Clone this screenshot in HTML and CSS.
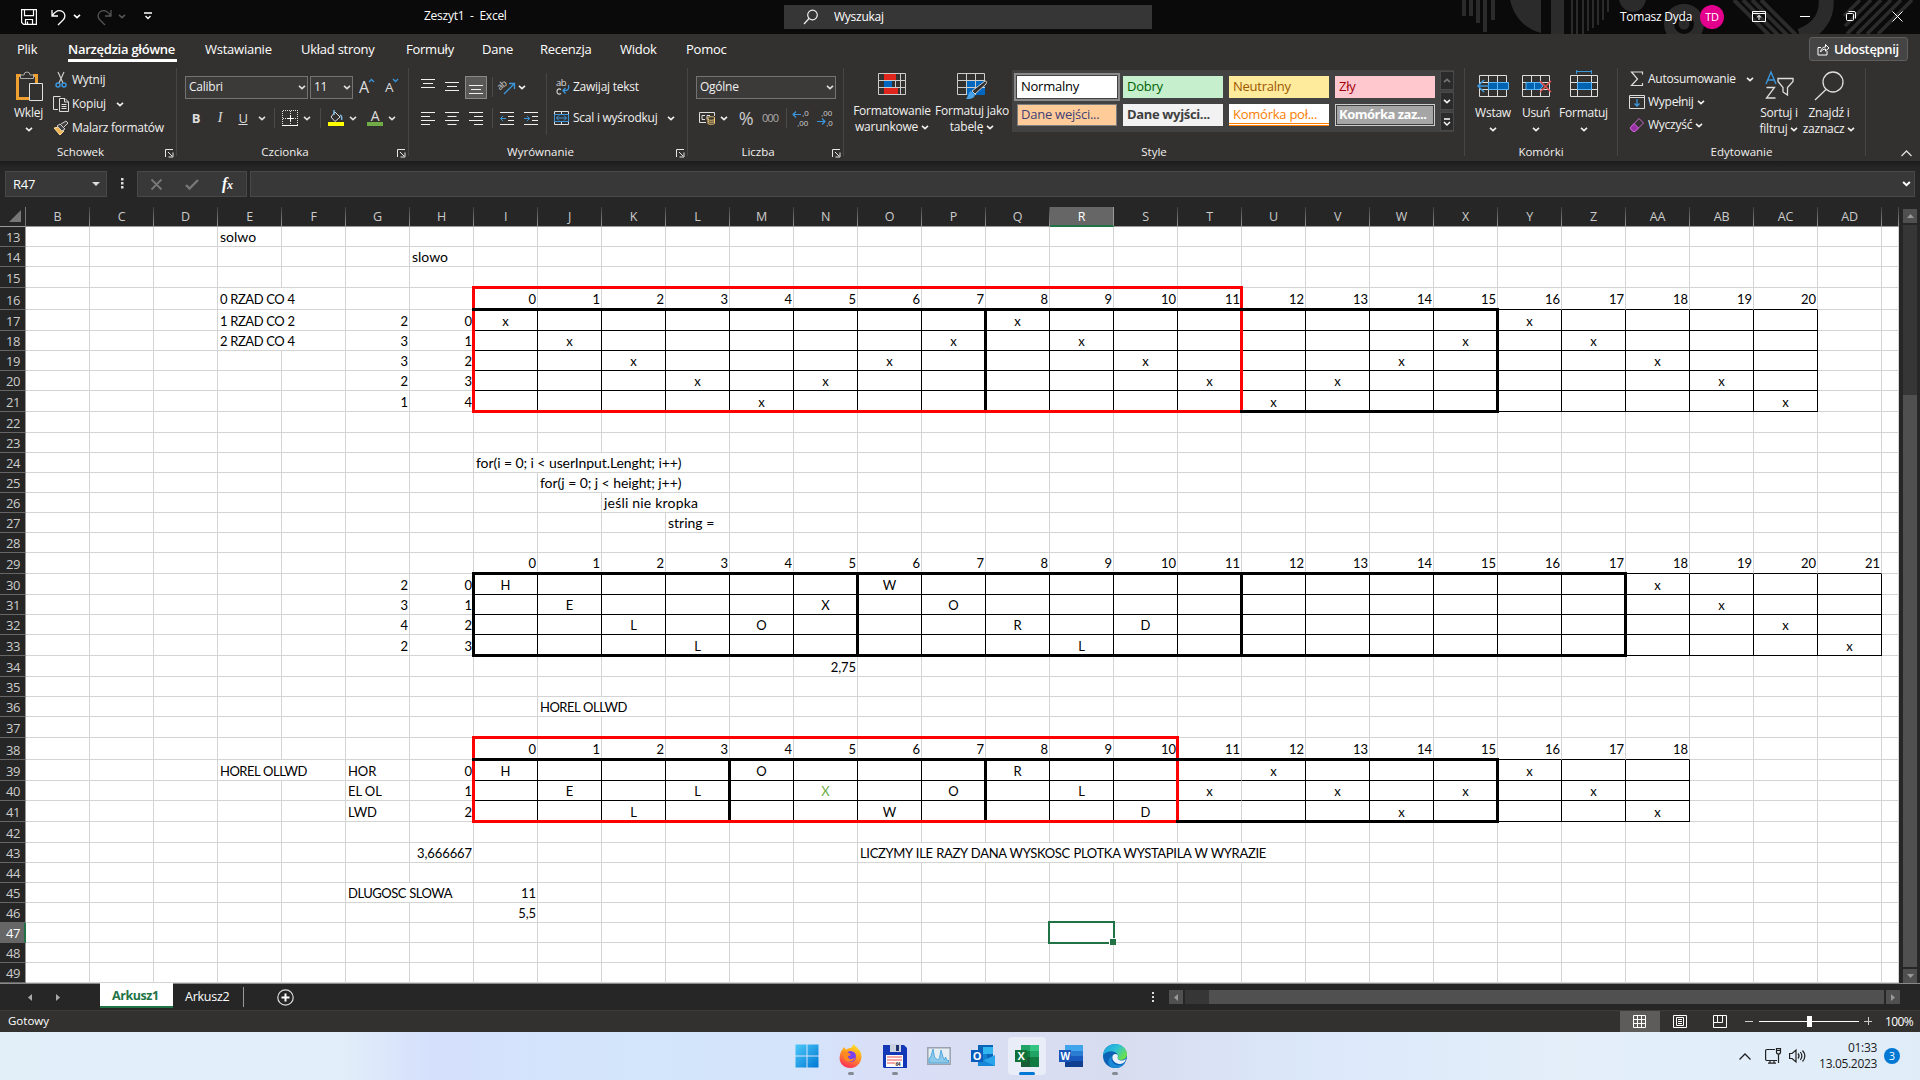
FILE: index.html
```html
<!DOCTYPE html>
<html lang="pl">
<head>
<meta charset="utf-8">
<title>Zeszyt1 - Excel</title>
<link rel="stylesheet" href="styles.css">
</head>
<body>
<svg class="defs" width="0" height="0">
  <symbol id="chev" viewBox="0 0 8 5"><path d="M1 .8 4 3.6 7 .8" fill="none" stroke="currentColor" stroke-width="1.6"/></symbol>
  <symbol id="launch" viewBox="0 0 9 9"><path d="M.5 8V.5H8M3 3l4 4M8 3.5V8H3.5" fill="none" stroke="#e6e6e6"/></symbol>
  <linearGradient id="gwin" x2="1" y2="1"><stop stop-color="#4cc8f8"/><stop offset="1" stop-color="#0078d4"/></linearGradient>
  <linearGradient id="gff" x1=".7" y1="0" x2=".3" y2="1"><stop stop-color="#ffe226"/><stop offset=".45" stop-color="#ff9a1f"/><stop offset="1" stop-color="#ff2a5a"/></linearGradient>
  <linearGradient id="gedge" x2="1" y2=".6"><stop stop-color="#1b9de2"/><stop offset=".55" stop-color="#2fc2d6"/><stop offset="1" stop-color="#6ae04c"/></linearGradient>
</svg>

<header class="titlebar">
  <div class="quick">
    <svg width="16" height="16" viewBox="0 0 16 16" fill="none" stroke="#fff" stroke-width="1.2"><path d="M.6.6h14.8v14.8H2.6l-2-2zM3.5.6v6h9v-6M4.5 15v-4.5h7V15M6.5 12.500v2.500"/></svg>
    <svg width="16" height="17" viewBox="0 0 16 17" fill="none" stroke="#fff" stroke-width="1.3"><path d="M1 1v6h6M1.200 6.800C4 2.500 8 .5 11.500 2.500c3 2 3 5.500 1 8L7 16"/></svg>
    <svg class="c lit" width="8" height="5"><use href="#chev"/></svg>
    <svg width="16" height="17" viewBox="0 0 16 17" fill="none" stroke="#555" stroke-width="1.3"><path d="M15 1v6H9M14.800 6.800C12 2.500 8 .5 4.500 2.500c-3 2-3 5.500-1 8L9 16"/></svg>
    <svg class="c dim" width="8" height="5"><use href="#chev"/></svg>
    <svg class="more" width="8" height="8" viewBox="0 0 8 8" fill="none" stroke="#fff" stroke-width="1.300"><path d="M0 1h8M1.500 4 4 6.500 6.500 4"/></svg>
  </div>
  <div class="doc">Zeszyt1 &nbsp;-&nbsp; Excel</div>
  <div class="search">
    <svg width="16" height="16" viewBox="0 0 16 16" fill="none" stroke="#eee" stroke-width="1.200"><circle cx="9.500" cy="6" r="4.800"/><path d="M6 9.500 1 15"/></svg>
    <span>Wyszukaj</span>
  </div>
  <div class="right">
    <svg class="deco" width="460" height="34" viewBox="1460 0 460 34" fill="none" stroke="#2b2b2b">
      <path stroke-width="4" d="M1464 0v16M1471 0v16M1478 0v23M1485 0v32M1493 0v20"/>
      <path fill="#2b2b2b" stroke="none" d="M1510 0h31v33c-16-4-27-16-31-33zM1551 0h13v34h-13zM1619 0h27c-2 8-7 12-13 12s-12-4-14-12z"/>
      <path stroke-width="2" d="M1572 0v34M1577 0v34M1583 0v34M1588 0v31M1593 0v28M1598 0v25M1603 0v20M1608 0v12"/>
      <circle cx="1684" cy="24" r="15" stroke-width="10"/><circle cx="1684" cy="24" r="3" stroke-width="5"/>
      <path stroke-width="4" d="M1734 0l37 37M1743 0l37 37M1752 0l37 37M1761 0l35 35"/>
      <path stroke-width="15" d="M1826-2c2 18-8 32-26 38"/>
      <path stroke-width="3.500" d="M1860 0l-16 16M1871 0l-26 26M1881 0l-34 34M1891 0l-34 34M1901 0l-34 34M1912 0l-34 34"/>
    </svg>
    <span class="user">Tomasz Dyda</span>
    <span class="avatar">TD</span>
    <svg class="w1" width="14" height="11" viewBox="0 0 14 11" fill="none" stroke="#fff"><path d="M.5.5h13v10H.5zM.5 2.500h13M7 9V4.500M4.800 6.500 7 4.500l2.200 2"/></svg>
    <svg class="w2" width="10" height="10" viewBox="0 0 10 10" stroke="#fff"><path d="M0 5.500h10"/></svg>
    <svg class="w3" width="10" height="10" viewBox="0 0 10 10" fill="none" stroke="#fff"><rect x=".5" y="2.500" width="7" height="7" rx="1"/><path d="M2.500.5H8A1.500 1.500 0 0 1 9.500 2v5.500"/></svg>
    <svg class="w4" width="11" height="11" viewBox="0 0 11 11" stroke="#fff"><path d="M.5.5l10 10M10.500.5l-10 10"/></svg>
  </div>
</header>

<nav class="tabs">
  <span class="t1">Plik</span><span class="t2"><b>Narzędzia główne</b></span><span class="t3">Wstawianie</span><span class="t4">Układ strony</span><span class="t5">Formuły</span><span class="t6">Dane</span><span class="t7">Recenzja</span><span class="t8">Widok</span><span class="t9">Pomoc</span>
  <button class="share"><svg width="13" height="13" viewBox="0 0 13 13" fill="none" stroke="#fff"><path d="M4 4.500H1v7.500h9V8M3.500 9C4 5.500 6 4 8.500 4V1.500L12 5 8.500 8V6C6.500 6 5 7 3.500 9z"/></svg>Udostępnij</button>
</nav>

<section class="ribbon">
  <div class="group g-clip">
    <div class="body">
      <div class="big paste"><svg width="28" height="31" viewBox="0 0 28 31" fill="none"><path d="M6 4.500H2.500v23H14M18 4.500h3.500V12" stroke="#f0a030" stroke-width="3"/><path d="M5.500 7.500V4H9a3 3 0 0 1 6 0h3.500v3.500z" fill="#33312f" stroke="#aaa"/><path d="M14.500 12.500h13v17h-13z" fill="#33312f" stroke="#e0e0e0"/></svg><span>Wklej</span><svg class="c" width="8" height="5"><use href="#chev"/></svg></div>
      <div class="lines">
        <div><svg width="16" height="16" viewBox="0 0 16 16" fill="none" stroke="#ccc" stroke-width="1.200"><path d="M5 0l5 11M11 0 6 11"/><g stroke="#3a96dd" stroke-width="1.500"><circle cx="5" cy="13" r="2"/><circle cx="11" cy="13" r="2"/></g></svg>Wytnij</div>
        <div><svg width="16" height="16" viewBox="0 0 16 16" fill="none" stroke="#ddd"><path d="M5 13.500H.5V.5h7M6.500 2.500H12l3.500 3.500v9.500h-9zM11.500 2.500V6h4M8.500 8.500h5M8.500 10.500h5M8.500 12.500h5"/></svg>Kopiuj<svg class="c" width="8" height="5"><use href="#chev"/></svg></div>
        <div><svg width="16" height="16" viewBox="0 0 16 16"><path d="M1 8l5-1 5 4-4 4z" fill="#f2b451" stroke="#ffe0a0"/><path d="M4 6l3-2 5 5-3 2zM8 4l5-3 2 2-4 4" fill="#444" stroke="#ccc"/></svg>Malarz formatów</div>
      </div>
    </div>
    <div class="foot has-launch"><span>Schowek</span><svg width="9" height="9"><use href="#launch"/></svg></div>
  </div>

  <div class="group g-font">
    <div class="body rows">
      <div class="row r1">
        <div class="combo name">Calibri<svg width="8" height="5"><use href="#chev"/></svg></div>
        <div class="combo size">11<svg width="8" height="5"><use href="#chev"/></svg></div>
        <span class="grow big-a">A<svg width="5" height="3" viewBox="0 0 5 3"><path d="M0 3 2.500.5 5 3" fill="none" stroke="#3a96dd" stroke-width="1.300"/></svg></span>
        <span class="grow small-a">A<svg width="5" height="3" viewBox="0 0 5 3"><path d="M0 0l2.500 2.500L5 0" fill="none" stroke="#3a96dd" stroke-width="1.300"/></svg></span>
      </div>
      <div class="row r2">
        <b>B</b><i>I</i><u>U</u><svg width="8" height="5"><use href="#chev"/></svg><s></s>
        <svg width="16" height="16" viewBox="0 0 16 16" shape-rendering="crispEdges"><path d="M.5.5h15v15M.5.5v15M8 1v14M1 8h14" stroke="#ddd" fill="none" stroke-dasharray="1 1"/><path d="M0 15.500h16M5 8h6M8 5v6" stroke="#fff"/></svg>
        <svg width="8" height="5"><use href="#chev"/></svg><s></s>
        <svg width="16" height="16" viewBox="0 0 16 16"><path d="M7 2l5 5-5 4.500L3 7z" fill="none" stroke="#ddd"/><path d="M6 0v5M12 5c2 1 2 3 1.500 5" fill="none" stroke="#7fb8e0" stroke-width="1.500"/><path d="M0 12h16v4H0z" fill="#ff0"/></svg>
        <svg width="8" height="5"><use href="#chev"/></svg>
        <span class="fc">A</span><svg width="8" height="5"><use href="#chev"/></svg>
      </div>
    </div>
    <div class="foot has-launch"><span>Czcionka</span><svg width="9" height="9"><use href="#launch"/></svg></div>
  </div>

  <div class="group g-align">
    <div class="body">
      <div class="rows icons">
        <div class="row">
          <svg class="up" width="14" height="10" viewBox="0 0 14 10" stroke="#eee"><path d="M0 .5h14M2 4.500h10M0 8.500h14"/></svg>
          <svg width="14" height="10" viewBox="0 0 14 10" stroke="#eee"><path d="M0 .5h14M2 4.500h10M0 8.500h14"/></svg>
          <span class="sel"><svg width="14" height="10" viewBox="0 0 14 10" stroke="#eee"><path d="M0 .5h14M2 4.500h10M0 8.500h14"/></svg></span>
          <s></s>
          <svg width="18" height="16" viewBox="0 0 18 16"><text x="1" y="9" font-size="9" fill="#ccc" transform="rotate(-40 5 9)">ab</text><path d="M6 15 16 5M11 4.500h5.500V10" fill="none" stroke="#3a96dd" stroke-width="1.300"/></svg>
          <svg width="8" height="5"><use href="#chev"/></svg>
        </div>
        <div class="row">
          <svg width="14" height="13" viewBox="0 0 14 13" stroke="#eee"><path d="M0 .5h14M0 4.500h9M0 8.500h14M0 12.500h9"/></svg>
          <svg width="14" height="13" viewBox="0 0 14 13" stroke="#eee"><path d="M0 .5h14M2.500 4.500h9M0 8.500h14M2.500 12.500h9"/></svg>
          <svg width="14" height="13" viewBox="0 0 14 13" stroke="#eee"><path d="M0 .5h14M5 4.500h9M0 8.500h14M5 12.500h9"/></svg>
          <s></s>
          <svg width="14" height="13" viewBox="0 0 14 13" stroke="#eee" fill="none"><path d="M0 .5h14M8 4.500h6M8 8.500h6M0 12.500h14"/><path d="M6 6.500H.5M3 4 .5 6.500 3 9" stroke="#3a96dd"/></svg>
          <svg width="14" height="13" viewBox="0 0 14 13" stroke="#eee" fill="none"><path d="M0 .5h14M8 4.500h6M8 8.500h6M0 12.500h14"/><path d="M0 6.500h5.500M3 4l2.500 2.500L3 9" stroke="#3a96dd"/></svg>
        </div>
      </div>
      <div class="rows wrap">
        <div class="row"><svg width="16" height="16" viewBox="0 0 16 16"><text x="2" y="6.500" font-size="9.500" fill="#ddd">ab</text><path d="M7 10.500C4.500 9 3 10.500 3 12.500s1.500 3.500 4 2" fill="none" stroke="#ddd" stroke-width="1.100"/><path d="M14.500 6c1 4-1 6-5 5.500M11.500 9 9 11.500l2.500 3" fill="none" stroke="#3a96dd" stroke-width="1.300"/></svg>Zawijaj tekst</div>
        <div class="row"><svg width="16" height="15" viewBox="0 0 16 15" fill="none"><path d="M.5.5h14v13H.5zM7.500 0v14" stroke="#ddd"/><path d="M.5 3.500h14v7H.5z" fill="#33312f" stroke="#3a96dd"/><path d="M2.500 7h10M5 4.500 2.500 7 5 9.500M10 4.500 12.500 7 10 9.500" stroke="#3a96dd"/></svg>Scal i wyśrodkuj<svg class="c" width="8" height="5"><use href="#chev"/></svg></div>
      </div>
    </div>
    <div class="foot has-launch"><span>Wyrównanie</span><svg width="9" height="9"><use href="#launch"/></svg></div>
  </div>

  <div class="group g-num">
    <div class="body rows">
      <div class="row"><div class="combo fmt">Ogólne<svg width="8" height="5"><use href="#chev"/></svg></div></div>
      <div class="row r2">
        <svg width="16" height="14" viewBox="0 0 16 14" fill="none"><path d="M7 11.500H.5v-10h15V5M6 4.500H3v4h3M8 8.500v-4h3" stroke="#ddd"/><path d="M9 6.500c0-1 6.500-1 6.500 0v6c0 1-6.500 1-6.500 0z" fill="#33312f" stroke="#f6cf78"/><path d="M9 8.500c1 1 5.500 1 6.500 0M9 10.500c1 1 5.500 1 6.500 0" stroke="#f6cf78"/></svg>
        <svg width="8" height="5"><use href="#chev"/></svg>
        <span class="pct">%</span><span class="zeros">000</span><s></s>
        <svg class="dec" width="16" height="16" viewBox="0 0 16 16"><text x="9" y="6.300">,0</text><text x="4" y="15.700">,00</text><path d="M8 4.500H0M3 1.500l-3 3 3 3" fill="none" stroke="#3a96dd" stroke-width="1.200"/></svg>
        <svg class="dec" width="16" height="16" viewBox="0 0 16 16"><text x="4" y="6.300">,00</text><text x="9" y="15.700">,0</text><path d="M0 11.500h8M5 8.500l3 3-3 3" fill="none" stroke="#3a96dd" stroke-width="1.200"/></svg>
      </div>
    </div>
    <div class="foot has-launch"><span>Liczba</span><svg width="9" height="9"><use href="#launch"/></svg></div>
  </div>

  <div class="group g-style">
    <div class="body">
      <div class="big cf"><svg width="28" height="29" viewBox="0 -3 28 29" fill="none"><path d="M.5.500h27v21H.5zM6.500 0v22M17.500 0v22M22.500 0v22M0 7.500h28M0 14.500h28" stroke="#ccc"/><path d="M6 1h12v6H6zM6 15h14v6H6z" fill="#e0261c"/><path d="M6 8h8v6H6z" fill="#0067c0"/></svg><span>Formatowanie</span><span>warunkowe <svg width="8" height="5"><use href="#chev"/></svg></span></div>
      <div class="big ft"><svg width="30" height="29" viewBox="0 -3 30 29" fill="none"><path d="M.5.500h27v21H.5z" stroke="#ccc"/><path d="M9 7h19v15H9z" fill="#0067c0"/><path d="M9.500 0v22M18.500 0v22M0 7.500h28M0 14.500h28" stroke="#ccc"/><path d="M28 8c2 0 2 1 1 3L18 21l-3-3z" fill="#33312f" stroke="#ccc"/><path d="M14 18l4 4c-1 4-5 4-9 4 2-2 2-6 5-8z" fill="#4aa3e6"/></svg><span>Formatuj jako</span><span>tabelę <svg width="8" height="5"><use href="#chev"/></svg></span></div>
      <div class="gallery">
        <div class="swatches">
          <span class="normal">Normalny</span><span class="good">Dobry</span><span class="neutral">Neutralny</span><span class="bad">Zły</span>
          <span class="input">Dane wejści...</span><span class="output">Dane wyjści...</span><span class="linked">Komórka poł...</span><span class="check">Komórka zaz...</span>
        </div>
        <div class="spin"><div class="off"><svg width="8" height="5"><use href="#chev"/></svg></div><div><svg width="8" height="5"><use href="#chev"/></svg></div><div><svg width="8" height="8" viewBox="0 0 8 8" fill="none" stroke="#fff" stroke-width="1.400"><path d="M1 1h6M1 4l3 3 3-3"/></svg></div></div>
      </div>
    </div>
    <div class="foot"><span>Style</span></div>
  </div>

  <div class="group g-cells">
    <div class="body">
      <div class="big"><svg width="34" height="31" viewBox="0 0 34 31" fill="none"><path d="M3.500 5.500h27v21h-27zM12.500 5.500v21M21.500 5.500v21M3.500 12.500h27M3.500 19.500h27" stroke="#ddd"/><path d="M12.500 12.500h20v7h-20zM21.500 12.500v7" fill="#0063b1" stroke="#5ab4f5"/><path d="M13 16H2M8 10l-6 6 6 6" stroke="#3a96dd" stroke-width="1.500"/></svg><span>Wstaw</span><svg class="c" width="8" height="5"><use href="#chev"/></svg></div>
      <div class="big"><svg width="34" height="31" viewBox="0 0 34 31" fill="none"><path d="M3.500 5.500h27v21h-27zM12.500 5.500v21M21.500 5.500v21M3.500 12.500h27M3.500 19.500h27" stroke="#ddd"/><path d="M7 12.500h14l3 3.500-3 3.500H7zM15.500 12.500v7" fill="#0063b1" stroke="#5ab4f5"/><path d="M21 11l11 11M32 11 21 22" stroke="#e05050" stroke-width="1.500"/></svg><span>Usuń</span><svg class="c" width="8" height="5"><use href="#chev"/></svg></div>
      <div class="big"><svg width="34" height="31" viewBox="0 0 34 31" fill="none"><path d="M3.500 5.500h27v21h-27zM10.500 5.500v21M24.500 5.500v21M3.500 12.500h27M3.500 19.500h27" stroke="#ddd"/><path d="M10.500 12.500h14v7h-14z" fill="#0063b1" stroke="#5ab4f5"/><path d="M9.500 1.500h15M9.500 0v4M24.500 0v4" stroke="#3a96dd"/></svg><span>Formatuj</span><svg class="c" width="8" height="5"><use href="#chev"/></svg></div>
    </div>
    <div class="foot"><span>Komórki</span></div>
  </div>

  <div class="group g-edit">
    <div class="body">
      <div class="lines">
        <div class="auto"><svg width="16" height="16" viewBox="0 0 16 16" fill="none" stroke="#ddd" stroke-width="1.200"><path d="M13.500 3.500V1H2.500l6 7-6 6.500h11V12"/></svg>Autosumowanie<svg class="c" width="8" height="5"><use href="#chev"/></svg></div>
        <div><svg width="16" height="16" viewBox="0 0 16 16" fill="none" stroke="#ddd"><path d="M.5 1.500h15v13H.5zM.5 3.500h15"/><path d="M8 5v7M5.500 9.500 8 12l2.500-2.500" stroke="#3a96dd" stroke-width="1.300"/></svg>Wypełnij<svg class="c" width="8" height="5"><use href="#chev"/></svg></div>
        <div><svg width="16" height="16" viewBox="0 0 16 16" fill="none" stroke="#c868d0"><path d="M10 1.500 14.500 6 6 14.500H4L1 11z"/><path d="M5 6.500 9.500 11 6 14.500H4L1 11z" fill="#9a2fa8"/></svg>Wyczyść<svg class="c" width="8" height="5"><use href="#chev"/></svg></div>
      </div>
      <div class="big sort"><svg width="30" height="31" viewBox="0 0 30 31" fill="none"><path d="M2 14 7 2l5 12M4 10h6" stroke="#3a96dd" stroke-width="1.400"/><path d="M2.500 17.500h8l-8 10.500h9M14 8.500h15v3l-5.500 6V25L19 22v-4.500l-5-6z" stroke="#ddd" stroke-width="1.300"/></svg><span>Sortuj i</span><span>filtruj <svg width="8" height="5"><use href="#chev"/></svg></span></div>
      <div class="big find"><svg width="30" height="31" viewBox="0 0 30 31" fill="none" stroke="#ddd" stroke-width="1.300"><circle cx="19" cy="12" r="10"/><path d="M12 19.500 1 30"/></svg><span>Znajdź i</span><span>zaznacz <svg width="8" height="5"><use href="#chev"/></svg></span></div>
    </div>
    <div class="foot"><span>Edytowanie</span></div>
  </div>
  <svg class="collapse" width="11" height="7" viewBox="0 0 11 7" fill="none" stroke="#ddd" stroke-width="1.300"><path d="M.5 6 5.500 1l5 5"/></svg>
</section>

<section class="formula">
  <div class="namebox">R47<svg width="8" height="4" viewBox="0 0 8 4"><path d="M0 0h8L4 4z" fill="#ddd"/></svg></div>
  <svg class="dots" width="3" height="11" viewBox="0 0 3 11"><path d="M0 0h2.500v2.500H0zM0 4h2.500v2.500H0zM0 8h2.500v2.500H0z" fill="#ddd"/></svg>
  <div class="fx">
    <svg width="11" height="11" viewBox="0 0 11 11" stroke="#777" stroke-width="1.800"><path d="M.5.5l10 10M10.500.5l-10 10"/></svg>
    <svg width="14" height="11" viewBox="0 0 14 11" fill="none" stroke="#777" stroke-width="2.400"><path d="M1 6l3.500 3.500L13 1"/></svg>
    <span>f<small>x</small></span>
  </div>
  <div class="input"><svg width="9" height="6" viewBox="0 0 8 5"><path d="M1 .8 4 3.600 7 .8" fill="none" stroke="#fff" stroke-width="1.800"/></svg></div>
</section>

<main class="work">
  <div class="sheet" id="sheet"></div>
  <div class="vscroll"><div class="sbtn"><svg width="7" height="4" viewBox="0 0 7 4"><path d="M0 4h7L3.500 0z" fill="#999"/></svg></div><div class="vtrack"><div class="vthumb"></div></div><div class="sbtn"><svg width="7" height="4" viewBox="0 0 7 4"><path d="M0 0h7L3.500 4z" fill="#999"/></svg></div></div>
</main>

<div class="sheetbar">
  <svg class="prev" width="4" height="7" viewBox="0 0 4 7"><path d="M4 0v7L0 3.500z" fill="#aaa"/></svg>
  <svg class="next" width="4" height="7" viewBox="0 0 4 7"><path d="M0 0v7l4-3.500z" fill="#aaa"/></svg>
  <span class="tab on">Arkusz1</span><span class="tab">Arkusz2</span>
  <svg class="add" width="17" height="17" viewBox="0 0 17 17" fill="none" stroke="#ddd"><circle cx="8.500" cy="8.500" r="7.700" stroke-width="1.200"/><path d="M8.500 4.500v8M4.500 8.500h8" stroke="#fff" stroke-width="2"/></svg>
  <svg class="dots" width="3" height="11" viewBox="0 0 3 11"><path d="M0 0h2v2H0zM0 4h2v2H0zM0 8h2v2H0z" fill="#ddd"/></svg>
  <div class="hscroll"><div class="sbtn"><svg width="4" height="7" viewBox="0 0 4 7"><path d="M4 0v7L0 3.500z" fill="#999"/></svg></div><div class="htrack"><div class="hthumb"></div></div><div class="sbtn"><svg width="4" height="7" viewBox="0 0 4 7"><path d="M0 0v7l4-3.500z" fill="#999"/></svg></div></div>
</div>

<div class="status">
  <span class="ready">Gotowy</span>
  <div class="view on"><svg width="13" height="13" viewBox="0 0 13 13" fill="none" stroke="#fff"><path d="M.5.5h12v12H.5zM4.500 0v13M8.500 0v13M0 4.500h13M0 8.500h13"/></svg></div>
  <div class="view"><svg width="14" height="13" viewBox="0 0 14 13" fill="none" stroke="#fff"><path d="M.5.5h13v12H.5zM3.500 2.500h7v8h-7zM5 4.500h4M5 6.500h4M5 8.500h4"/></svg></div>
  <div class="view"><svg width="14" height="13" viewBox="0 0 14 13" fill="none" stroke="#fff"><path d="M.5.5h13v12H.5zM4.500 0v7.500h5V0M4.500 7.500H0"/></svg></div>
  <div class="zoom"><svg width="9" height="9" viewBox="0 0 9 9" stroke="#ccc"><path d="M0 4.500h8"/></svg><div class="slider"><div class="knob"></div></div><svg width="9" height="9" viewBox="0 0 9 9" stroke="#ccc"><path d="M0 4.500h8M4.500 0v8"/></svg></div>
  <span class="pc">100%</span>
</div>

<footer class="taskbar">
  <div class="apps">
    <div class="app"><svg width="24" height="24" viewBox="0 0 24 24" fill="url(#gwin)"><path d="M.5.5h11v11H.5zM12.500.5h11v11h-11zM.5 12.500h11v11H.5zM12.500 12.500h11v11h-11z"/></svg></div>
    <div class="app run"><svg width="24" height="24" viewBox="0 0 24 24"><path d="M3 6c1-1 1-2 1.500-3 1 1 2 2 3 2.500C9 4 10 4 12 4c1-1 2-3 3-4 1 3 5 4 7 9 2 8-3 15-10.500 15S-1 18 1 11c.3-2 1-4 2-5z" fill="url(#gff)"/><circle cx="11.500" cy="12.500" r="5.500" fill="#7a3ff0"/><path d="M4 8c3-1 5 0 7 2 2 1-1 2-2 2 0 4 5 4 7 1-1 6-9 6-11 1z" fill="#ff8a20"/></svg></div>
    <div class="app run"><svg width="24" height="24" viewBox="0 0 24 24"><path d="M0 1h21l3 3v20H1l-1-1z" fill="#1238b8"/><path d="M7 0h11v8H7z" fill="#ccd3e0"/><path d="M13 1h3v6h-3z" fill="#22336e"/><path d="M3 11h17v12H3z" fill="#fff"/><path d="M4 13h15M4 16h15M4 19h8" stroke="#ef8a8a" stroke-width="1.500"/><text x="12.500" y="22" font-size="5" font-weight="bold" fill="#333">64</text></svg></div>
    <div class="app"><svg width="24" height="24" viewBox="0 0 24 24"><path d="M.8 3.800h22.400v16.400H.8z" fill="#e6eef4" stroke="#99a3ad" stroke-width="1.500"/><path d="M2 19v-4l2-3 2-7 1.500 8 3 3 2-2 1.500-8 2 7 1.500 3 1-3 2 4 1-1v3z" fill="#8cc8ea" stroke="#3fa0d8" stroke-width=".8"/></svg></div>
    <div class="app"><svg width="24" height="24" viewBox="0 0 24 24"><path d="M7 1h15v20H7z" fill="#0a64b8"/><path d="M12 3h10v7H12z" fill="#35b5f0"/><path d="M7 10h9v6H7z" fill="#1080d0"/><path d="M24 11v11H7v-3z" fill="#2aa4ea"/><path d="M7 14l17 8H7z" fill="#1487d8"/><path d="M0 6h12v12H0z" fill="#0a5dbd"/><text x="6" y="16" text-anchor="middle" font-size="11" font-weight="bold" fill="#fff">O</text></svg></div>
    <div class="app run cur"><svg width="24" height="24" viewBox="0 0 24 24"><path d="M6 1h18v22H6z" fill="#107c41"/><path d="M6 1h9v6H6z" fill="#21a366"/><path d="M15 1h9v6h-9z" fill="#33c481"/><path d="M15 7h9v6h-9z" fill="#21a366"/><path d="M6 13h9v10H6z" fill="#185c37"/><path d="M0 6h12v12H0z" fill="#0f7038"/><text x="6" y="16" text-anchor="middle" font-size="11" font-weight="bold" fill="#fff">X</text></svg></div>
    <div class="app"><svg width="24" height="24" viewBox="0 0 24 24"><path d="M6 1h18v6H6z" fill="#41a5ee"/><path d="M6 7h18v5H6z" fill="#2b7cd3"/><path d="M6 12h18v6H6z" fill="#185abd"/><path d="M6 17h18v6H6z" fill="#103f91"/><path d="M0 6h12v12H0z" fill="#1a56b8"/><text x="6" y="16" text-anchor="middle" font-size="10" font-weight="bold" fill="#fff">W</text></svg></div>
    <div class="app run"><svg width="24" height="24" viewBox="0 0 24 24"><circle cx="12" cy="12" r="12" fill="#0c63b5"/><path d="M0 11C1 4 6 0 12 0c7 0 12 5 12 10 0 6-6 7-9 5-1-1 1-2 0-4-3-6-12-4-15 0z" fill="url(#gedge)"/><path d="M9 12c-2 5 2 10 8 9 2 0 3-1 5-2-3 5-9 6-14 4-4-3-3-9 1-11z" fill="#1a8ad8"/><path d="M10 11c2-2 5-1 5 1 0 1-1 2 0 3 2 2 5 2 8 0-1 4-4 5-7 5-5-1-8-5-6-9z" fill="#eaf3fb"/></svg></div>
  </div>
  <div class="tray">
    <svg class="up" width="12" height="7" viewBox="0 0 12 7" fill="none" stroke="#222" stroke-width="1.300"><path d="M.5 6.500 6 1l5.500 5.500"/></svg>
    <svg class="net" width="16" height="16" viewBox="0 0 16 16" fill="none" stroke="#222" stroke-width="1.200"><path d="M10 1.500H2A1.400 1.400 0 0 0 .6 3v8A1.400 1.400 0 0 0 2 12.500h10M3 15.200h8M5 12.500v2.500M9 12.500v2.500M13.500 6v9M11.500.6h4v3.500a2 2 0 0 1-4 0zM11.500 2.500h4"/></svg>
    <svg class="vol" width="17" height="14" viewBox="0 0 17 14" fill="none" stroke="#222" stroke-width="1.200"><path d="M.6 4.500h2.500L7 1v12L3.100 9.500H.6zM9 4.500c1.300 1.500 1.300 3.500 0 5M11.300 3c2 2.500 2 5.500 0 8M13.500 1.500c3 3.500 3 7.500 0 11"/></svg>
    <div class="clock"><span>01:33</span><span>13.05.2023</span></div>
    <span class="badge">3</span>
  </div>
</footer>
<script src="sheet.js"></script>
</body>
</html>
```
FILE: styles.css
```css
* { box-sizing: border-box; }
body { margin: 0; width: 1920px; height: 1080px; overflow: hidden; background: #262626; color: #fff; font: 12px/16px "Open Sans", "Noto Sans", sans-serif; letter-spacing: -0.25px; display: flex; flex-direction: column; }
svg { display: block; flex: none; overflow: visible; }
.defs { position: absolute; }
text { letter-spacing: -0.5px; }

.titlebar { height: 34px; flex: none; background: #0a0a0a; display: flex; align-items: center; }
.quick { width: 424px; display: flex; align-items: center; padding-left: 21px; }
.lit { color: #fff; } .dim { color: #555; }
.quick svg:nth-child(2) { margin-left: 14px; }
.quick svg:nth-child(3) { margin-left: 6px; }
.quick svg:nth-child(4) { margin-left: 15px; }
.quick svg:nth-child(5) { margin-left: 6px; }
.quick .more { margin-left: 18px; }
.quick .more, .quick .c { margin-bottom: 2px; }
.doc { width: 360px; padding-bottom: 2px; }
.search { width: 368px; height: 24px; background: #363636; display: flex; align-items: center; gap: 15px; padding-left: 19px; }
.right { flex: 1; height: 34px; display: flex; align-items: center; position: relative; padding-left: 468px; }
.deco { position: absolute; left: 308px; top: 0; overflow: hidden; }
.right > :not(.deco) { position: relative; }
.user { width: 80px; white-space: nowrap; }
.avatar { width: 24px; height: 24px; border-radius: 50%; background: #e3008c; text-align: center; line-height: 24px; font-size: 11px; }
.w1 { margin-left: 28px; } .w2 { margin-left: 34px; } .w3 { margin-left: 36px; } .w4 { margin-left: 36px; }
.w1, .w2, .w3, .w4 { top: -1px; }

.tabs { height: 32px; flex: none; background: #33312f; display: flex; padding: 0 12px 0 17px; font-size: 13px; line-height: 30px; }
.tabs span { flex: none; white-space: nowrap; }
.t1 { width: 51px; } .t2 { width: 137px; } .t3 { width: 96px; } .t4 { width: 105px; } .t5 { width: 76px; } .t6 { width: 58px; } .t7 { width: 80px; } .t8 { width: 66px; }
.t2 b { display: block; width: 109px; height: 28px; border-bottom: 3px solid #fff; font-weight: 600; }
.share { margin: 3px 0 0 auto; width: 99px; height: 24px; padding: 0 0 0 7px; display: flex; align-items: center; gap: 4px; background: #454545; border: 1px solid #5f5f5f; border-radius: 3px; color: #fff; font: 600 13px/20px "Open Sans", sans-serif; letter-spacing: -0.35px; }

.ribbon { height: 95px; flex: none; background: #33312f; display: flex; color: #f0f0f0; }
.group { height: 88px; margin-top: 2px; border-right: 1px solid #484644; display: flex; flex-direction: column; flex: none; }
.body { height: 76px; flex: none; display: flex; }
.foot { height: 14px; flex: none; display: flex; align-items: center; font-size: 11.500px; letter-spacing: 0; margin-top: 2px; }
.foot.has-launch { padding-right: 2px; }
.foot span { flex: 1; text-align: center; padding-bottom: 2px; }
.has-launch span { padding-right: 4px; }
.g-clip { width: 177px; } .g-font { width: 232px; } .g-align { width: 279px; } .g-num { width: 156px; } .g-style { width: 621px; } .g-cells { width: 153px; } .g-edit { width: 248px; }
.big { display: flex; flex-direction: column; align-items: center; padding-top: 2px; white-space: nowrap; flex: none; }
.big > svg:first-child { margin-bottom: 4px; }
.big span { display: flex; align-items: center; gap: 3px; height: 16px; }
.big .c { margin-top: 6px; }
.paste { width: 53px; padding-left: 4px; padding-top: 3px; }
.paste > svg:first-child { margin-bottom: 3px; }
.lines { display: flex; flex-direction: column; gap: 8px; padding-top: 4px; flex: none; }
.lines > div { display: flex; align-items: center; gap: 3px; height: 16px; white-space: nowrap; }
.g-clip .lines .c { margin-left: 7px; }
.rows { display: flex; flex-direction: column; padding-top: 7px; gap: 7px; }
.row { height: 24px; display: flex; align-items: center; }
.row s { width: 1px; height: 20px; background: #4c4a48; }
.combo { height: 23px; background: #3b3a39; border: 1px solid #757371; display: flex; align-items: center; justify-content: space-between; padding: 0 1px 0 3px; }
.combo svg { color: #ddd; }
.g-font .rows { padding-left: 8px; }
.g-font .row, .g-num .row { flex: none; }
.name { width: 123px; margin-right: 2px; } .size { width: 43px; }
.grow { display: flex; color: #ddd; }
.big-a { margin-left: 6px; font-size: 16px; } .small-a { margin-left: 11px; font-size: 13.500px; }
.r2 { display: grid; justify-items: center; }
.g-font .r2 { grid-template-columns: 24px 24px 22px 16px 9px 22px 12px 14px 18px 16px 28px 6px; color: #ddd; font-size: 13px; margin-left: -1px; }
.g-font i { font-family: "Liberation Serif", serif; font-size: 14px; }
.fc { width: 16px; height: 16px; border-bottom: 4px solid #70ad47; line-height: 12px; font-size: 14px; text-align: center; }
.icons { width: 137px; padding-left: 7px; }
.icons .row { display: grid; grid-template-columns: 24px 24px 24px 8px 22px 8px; justify-items: center; }
.icons .row + .row { grid-template-columns: 24px 24px 24px 8px 22px 26px; }
.icons .up { margin-bottom: 6px; }
.sel { width: 22px; height: 23px; background: #5a5856; border: 1px solid #8a8886; display: grid; place-items: end center; padding-bottom: 3px; }
.wrap { border-left: 1px solid #484644; height: 62px; margin-top: 5px; padding: 2px 0 0 7px; }
.wrap .row { gap: 3px; white-space: nowrap; }
.wrap .c { margin-left: 7px; }
.g-num .rows { padding-left: 8px; }
.fmt { width: 140px; }
.g-num .r2 { grid-template-columns: 22px 12px 32px 16px 16px 13px 36px; }
.pct { font-size: 18px; color: #ccc; } .zeros { font-size: 11px; letter-spacing: -1px; color: #aaa; justify-self: center; margin: 0 -6px; }
.dec text { font: 8px "Liberation Sans", sans-serif; letter-spacing: 0; fill: #ccc; }
.cf { width: 96px; } .ft { width: 64px; } .ft > * { flex: none; }
.gallery { margin: 2px 0 0 8px; width: 442px; height: 62px; background: #424242; display: flex; padding: 1px 0; flex: none; }
.swatches { width: 428px; display: grid; grid-template-columns: repeat(4, 100px); grid-auto-rows: 22px; gap: 6px; padding: 5px 0 0 5px; font-size: 13px; line-height: 21px; }
.swatches span { padding-left: 4px; white-space: nowrap; }
.normal { background: #fff; color: #000; outline: 2px solid #8a8a8a; outline-offset: 1px; }
.good { background: #c6efce; color: #006100; } .neutral { background: #ffeb9c; color: #9c5700; } .bad { background: #ffc7ce; color: #9c0006; }
.swatches .input { background: #fc9; color: #3f3f76; box-shadow: inset 0 0 0 1px #7f7f7f; }
.swatches .output { background: #f2f2f2; color: #3f3f3f; font-weight: 700; letter-spacing: -.35px; }
.linked { background: #fff; color: #fa7d00; border-bottom: 3px double #ff8001; }
.swatches .check { background: #a5a5a5; color: #fff; font-weight: 700; box-shadow: inset 0 0 0 1px #ccc, inset 0 0 0 2px #3f3f3f; letter-spacing: -.5px; }
.spin { width: 14px; display: flex; flex-direction: column; gap: 2px; }
.spin div { flex: 1; background: #2b2b2b; border: 1px solid #4a4a4a; display: grid; place-items: center; }
.spin .off { color: #777; } .off svg { transform: rotate(180deg); }
.g-cells .big:nth-child(1) { width: 56px; } .g-cells .big:nth-child(2) { width: 30px; } .g-cells .big:nth-child(3) { width: 65px; }
.g-edit .lines { width: 134px; padding: 3px 0 0 11px; gap: 7px; }
.auto .c { margin-left: 7px; }
.sort { width: 54px; } .find { width: 46px; }
.collapse { margin: 84px 0 0 35px; }

.formula { height: 46px; flex: none; display: flex; padding: 10px 5px 9px; background: linear-gradient(#1c1c1c, #262626 7px); }
.namebox, .fx, .formula .input { height: 26px; background: #383838; border: 1px solid #484848; }
.namebox { width: 102px; display: flex; align-items: center; justify-content: space-between; padding: 0 6px 0 7px; font-size: 13px; }
.formula .dots { margin: 7px 13px 0 14px; }
.fx { width: 110px; display: flex; align-items: center; padding-left: 13px; gap: 23px; }
.fx span { font: italic bold 16px/16px "Liberation Serif", serif; } .fx small { font-size: 12px; }
.formula .input { margin-left: 3px; width: 1665px; display: flex; align-items: center; justify-content: flex-end; padding-right: 3px; }

.work { height: 776px; flex: none; display: flex; }
.sheet { width: 1899px; height: 776px; display: grid; grid-template-columns: 26px repeat(29, 64px) 17px; grid-template-rows: 20px 20px 20px 21px 22px 21px 20px 20px 20px 21px 21px 20px 20px 20px 20px 20px 20px 21px 21px 20px 20px 21px 21px 20px 20px 21px 22px 21px 20px 21px 21px 20px 20px 20px 20px 20px 20px 20px; background: #fff; }
.col { background: #262626; border-bottom: 1px solid #9a9a9a; border-right: 1px solid; border-image: linear-gradient(#3a3a3a, #9a9a9a) 1; color: #ccc; text-align: center; font-size: 12.500px; line-height: 20px; }
.num { background: #262626; color: #ccc; font-size: 13px; border-right: 1px solid #9a9a9a; border-bottom: 1px solid #666; display: flex; align-items: flex-end; justify-content: flex-end; line-height: 18px; letter-spacing: -.4px; padding-right: 5px; }
.corner { background: #262626; display: grid; place-items: end; padding: 0 4px 4px 0; border-right: 1px solid #777; border-bottom: 1px solid #9a9a9a; }
.col.on { background: #666; color: #fff; border-image: none; border-right-color: #999; border-bottom: 2px solid #217346; }
.num.on { background: #666; color: #fff; border-right: 2px solid #217346; padding-right: 4px; }
.cell { border-right: 1px solid #d4d4d4; border-bottom: 1px solid #d4d4d4; color: #000; font: 13px/18px Lato, "Open Sans", sans-serif; letter-spacing: -0.1px; padding: 0 1px 0 2px; white-space: nowrap; display: flex; align-items: flex-end; }
.cell.caps { letter-spacing: -0.5px; word-spacing: 0.5px; }
.cell.wide { letter-spacing: -0.32px; word-spacing: 0.5px; }
.cell.low { font-size: 14px; letter-spacing: 0; }
.cell.code { letter-spacing: -0.08px; }
.cell.loose { letter-spacing: 0.2px; }
.cell.tall { padding-bottom: 1px; }
.cell.r { justify-content: flex-end; } .cell.m { justify-content: center; padding-right: 2px; }
.cell.br { border-right-color: #000; } .cell.bb { border-bottom-color: #000; }
.cell.ok { color: #70ad47; }
.frame { margin: -2px -1px -1px -2px; border: 3px solid #000; }
.frame.red { border-color: #f00; }
.frame.top { border-width: 3px 0 0; } .frame.bottom { border-width: 0 0 3px; }
.cursor { margin: -2px -1px -1px -2px; border: 2px solid #217346; display: grid; place-items: end; }
.cursor::after { content: ""; width: 6px; height: 6px; margin: 0 -3px -3px 0; background: #217346; border: solid #fff; border-width: 1px 0 0 1px; }
.vscroll { margin: 2px 0 0 4px; width: 14px; display: flex; flex-direction: column; gap: 2px; }
.sbtn { width: 14px; height: 14px; flex: none; background: #505050; display: grid; place-items: center; }
.vtrack { flex: 1; background: #363636; padding-top: 170px; }
.vthumb { height: 572px; background: #505050; }

.sheetbar { height: 27px; flex: none; display: flex; align-items: center; background: #262626; border-top: 1px solid #8a8a8a; }
.prev { margin-left: 28px; } .next { margin-left: 24px; }
.tab { height: 20px; line-height: 19px; padding: 0 12px; border-right: 1px solid #999; font-size: 12.500px; width: 71px; }
.tab.on { width: 73px; height: 25px; align-self: flex-start; margin: -1px 0 0 40px; background: #fff; color: #217346; font-weight: 700; line-height: 26px; letter-spacing: -.45px; border: 0; border-bottom: 2px solid #217346; }
.add { margin-left: 33px; }
.sheetbar .dots { margin-left: 858px; }
.hscroll { margin-left: 14px; display: flex; gap: 2px; }
.htrack { width: 699px; background: #363636; padding-left: 24px; }
.hthumb { width: 675px; height: 14px; background: #505050; }

.status { height: 22px; flex: none; display: flex; align-items: center; background: #33312f; border-top: 1px solid #3f3d3b; }
.ready { width: 1612px; padding: 0 0 2px 8px; font-size: 11.500px; font-weight: 500; letter-spacing: 0; margin-right: 8px; }
.view { width: 40px; height: 21px; display: grid; place-items: center; } .view.on { background: #5e5c5a; }
.view svg { margin: 0 1px 1px 0; }
.zoom { display: flex; align-items: center; margin-left: 5px; }
.slider { width: 100px; height: 1px; background: #fff; margin: 0 5px; display: flex; align-items: center; }
.knob { width: 5px; height: 11px; background: #fff; margin-left: 48px; flex: none; }
.pc { margin-left: 12px; letter-spacing: -.6px; }

.taskbar { height: 48px; flex: none; display: flex; color: #1b1b1b; background: linear-gradient(90deg, #e2eef8 0, #e2eef9 340px, #d5e0fc 430px, #d3e6fb 640px, #d4e4fb 800px, #d9dff7 880px, #d8dcef 1120px, #dbe8fa 1300px, #e3eef9 1560px, #e0edf9 100%); }
.apps { padding-left: 785px; display: flex; width: 1739px; }
.app { width: 38px; height: 38px; margin: 5px 3px 0; border-radius: 4px; display: flex; flex-direction: column; align-items: center; padding-top: 7px; }
.app.run::after { content: ""; width: 6px; height: 3px; border-radius: 2px; background: #858a94; margin-top: 4px; }
.app.cur { background: #e9edf8; } .app.cur::after { width: 16px; background: #0078d4; }
.tray { display: flex; align-items: center; }
.net { margin-left: 14px; } .vol { margin-left: 8px; }
.clock { width: 71px; display: flex; flex-direction: column; align-items: flex-end; letter-spacing: -.33px; }
.badge { width: 16px; height: 16px; margin-left: 7px; border-radius: 50%; background: #0078d4; color: #fff; text-align: center; font-size: 10.500px; }
```
FILE: sheet.js
```js
const sheet = document.getElementById('sheet');
const COLS = 'B C D E F G H I J K L M N O P Q R S T U V W X Y Z AA AB AC AD'.split(' ');
const FIRST = 13, LAST = 49;
const TALL = [16, 29, 38];

function add(cls, col, row, text, span) {
  const el = document.createElement('div');
  el.className = cls;
  el.style.gridColumn = col + ' / span ' + (span || 1);
  el.style.gridRow = row;
  if (text !== undefined) el.textContent = text;
  sheet.appendChild(el);
  return el;
}

// cell values: ref -> [text, alignment class, column span]
const data = {};
const put = (ref, text, cls = '', span = 1) => { data[ref] = [text, cls, span]; };
const marks = (row, str) => str.split(' ').forEach(p => { const [c, t] = p.split(':'); put(c + row, t || 'x', 'm'); });
const count = (row, n) => { for (let i = 0; i < n; i++) put(COLS[7 + i] + row, i, 'r'); };

put('E13', 'solwo', 'low'); put('H14', 'slowo', 'low');
put('E16', '0 RZAD CO 4', 'caps', 2); put('E17', '1 RZAD CO 2', 'caps', 2); put('E18', '2 RZAD CO 4', 'caps', 2);
[2, 3, 3, 2, 1].forEach((v, i) => { put('G' + (17 + i), v, 'r'); put('H' + (17 + i), i, 'r'); });
[2, 3, 4, 2].forEach((v, i) => { put('G' + (30 + i), v, 'r'); put('H' + (30 + i), i, 'r'); });
count(16, 21); count(29, 22); count(38, 19);
marks(17, 'I Q Y'); marks(18, 'J P R X Z'); marks(19, 'K O S W AA'); marks(20, 'L N T V AB'); marks(21, 'M U AC');
put('I24', 'for(i = 0; i < userInput.Lenght; i++)', 'low code', 4);
put('J25', 'for(j = 0; j < height; j++)', 'low code', 3);
put('K26', 'jeśli nie kropka', 'low loose', 2); put('L27', 'string =', 'low');
marks(30, 'I:H O:W AA'); marks(31, 'J:E N:X P:O AB'); marks(32, 'K:L M:O Q:R S:D AC'); marks(33, 'L:L R:L AD');
put('N34', '2,75', 'r'); put('J36', 'HOREL OLLWD', 'caps', 2);
put('E39', 'HOREL OLLWD', 'caps', 2);
['HOR', 'EL OL', 'LWD'].forEach((v, i) => { put('G' + (39 + i), v); put('H' + (39 + i), i, 'r'); });
marks(39, 'I:H M:O Q:R U Y'); marks(40, 'J:E L:L N:X P:O R:L T V X Z'); marks(41, 'K:L O:W S:D W AA');
data.N40[1] = 'm ok';
put('H43', '3,666667', 'r');
put('O43', 'LICZYMY ILE RAZY DANA WYSKOSC PLOTKA WYSTAPILA W WYRAZIE', 'wide', 7);
put('G45', 'DLUGOSC SLOWA', 'caps', 2); put('I45', 11, 'r'); put('I46', '5,5', 'r');

// bordered ranges: [first row, last row, last column index]
const tables = [[17, 21, 27], [30, 33, 28], [39, 41, 25]];

const corner = add('corner', 1, 1);
corner.innerHTML = '<svg width="12" height="12"><path d="M12 0v12H0z" fill="#777"/></svg>';
COLS.forEach((c, i) => add('col' + (c === 'R' ? ' on' : ''), i + 2, 1, c));
add('col', 31, 1, '');

for (let r = FIRST; r <= LAST; r++) {
  const gr = r - FIRST + 2;
  add('num' + (r === 47 ? ' on' : ''), 1, gr, r);
  for (let i = 0; i < COLS.length; i++) {
    const [text, cls, span] = data[COLS[i] + r] || ['', '', 1];
    let k = 'cell ' + cls + (TALL.includes(r) ? ' tall' : '');
    for (const [a, b, end] of tables) {
      if (i >= 7 && i <= end) {
        if (r >= a - 1 && r <= b) k += ' bb';
        if (r >= a && r <= b && !(COLS[i] === 'T' && r >= 39)) k += ' br';
      }
    }
    add(k, i + 2, gr, text, span);
    i += span - 1;
  }
  add('cell', 31, gr, '');
}

function frame(cls, c1, r1, c2, r2) {
  const a = COLS.indexOf(c1), b = COLS.indexOf(c2);
  add(cls, a + 2, (r1 - FIRST + 2) + ' / ' + (r2 - FIRST + 3), undefined, b - a + 1);
}
frame('frame', 'I', 17, 'P', 21); frame('frame', 'Q', 17, 'X', 21);
frame('frame red', 'I', 16, 'T', 21);
frame('frame top', 'I', 17, 'X', 21); frame('frame bottom', 'U', 17, 'X', 21);
frame('frame', 'I', 30, 'N', 33); frame('frame', 'O', 30, 'T', 33); frame('frame', 'U', 30, 'Z', 33);
frame('frame', 'I', 39, 'L', 41); frame('frame', 'M', 39, 'P', 41); frame('frame', 'Q', 39, 'X', 41);
frame('frame red', 'I', 38, 'S', 41);
frame('frame top', 'I', 39, 'X', 41); frame('frame bottom', 'T', 39, 'X', 41);
frame('cursor', 'R', 47, 'R', 47);
```
